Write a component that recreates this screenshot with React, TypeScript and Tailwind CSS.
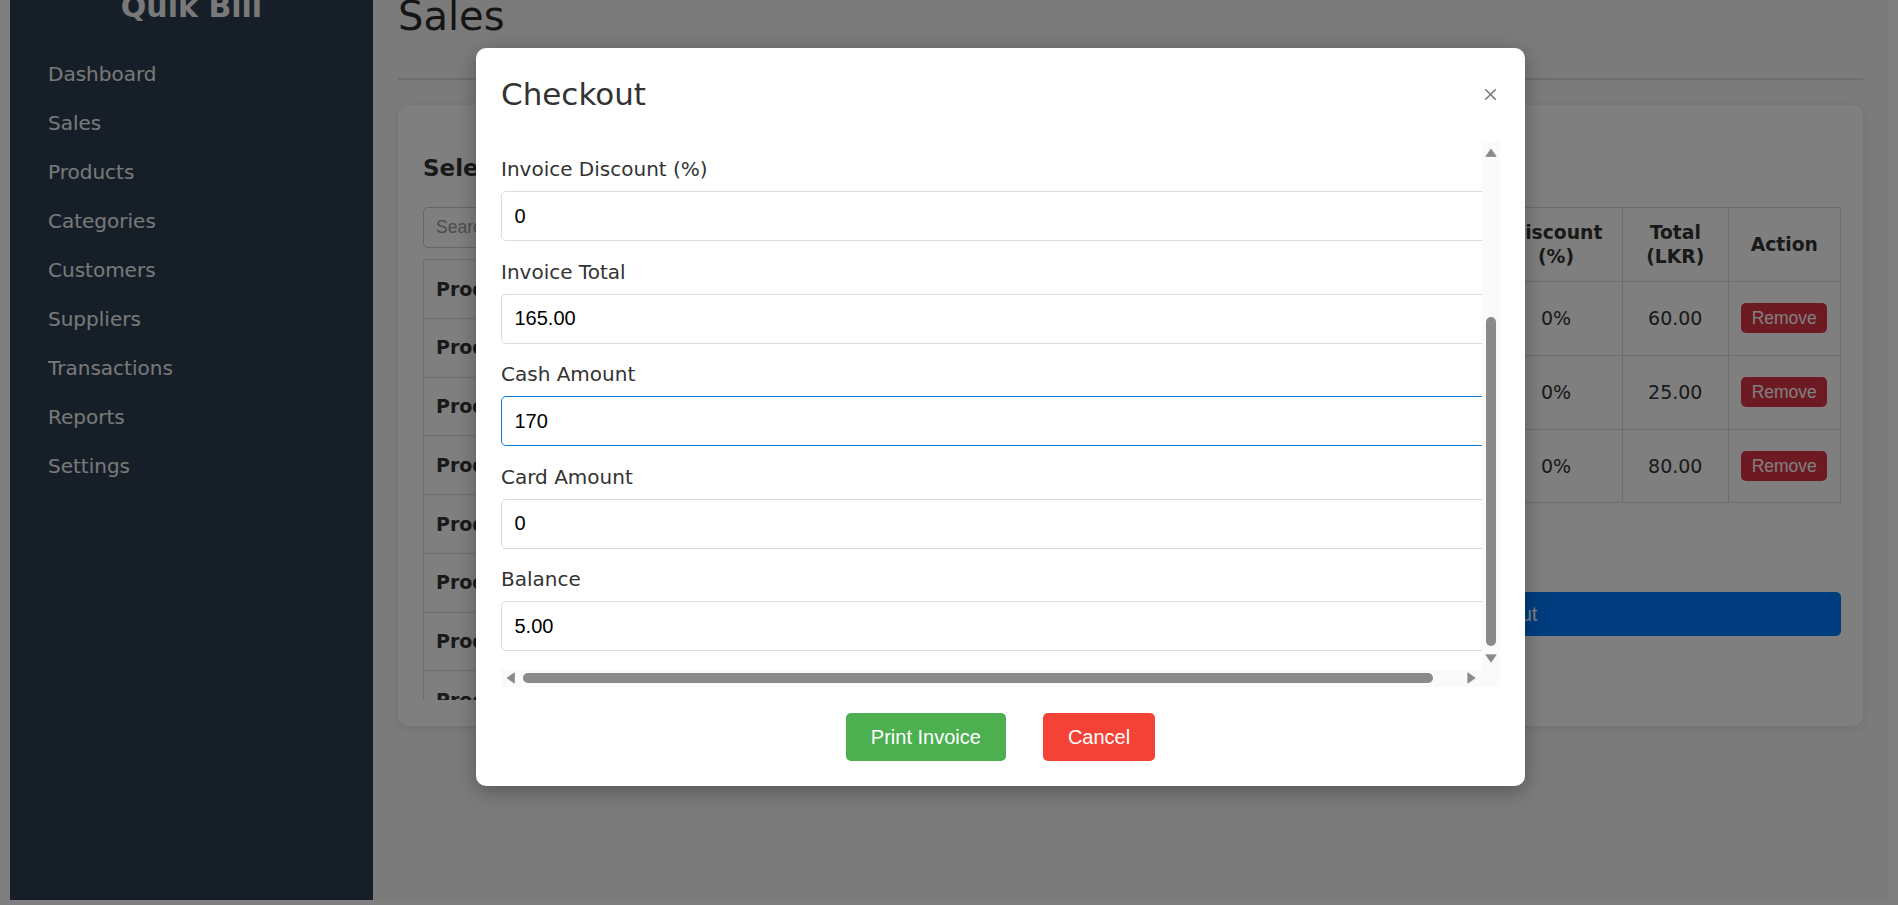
import React from "react";

const navItems = [
  "Dashboard",
  "Sales",
  "Products",
  "Categories",
  "Customers",
  "Suppliers",
  "Transactions",
  "Reports",
  "Settings",
];

const products = [
  "Product 1",
  "Product 2",
  "Product 3",
  "Product 4",
  "Product 5",
  "Product 6",
  "Product 7",
  "Product 8",
];

const cart = [
  { name: "Product 1", price: "20.00", qty: "3", disc: "0%", total: "60.00" },
  { name: "Product 2", price: "25.00", qty: "1", disc: "0%", total: "25.00" },
  { name: "Product 3", price: "40.00", qty: "2", disc: "0%", total: "80.00" },
];

const fields = [
  { label: "Invoice Discount (%)", value: "0", focused: false },
  { label: "Invoice Total", value: "165.00", focused: false },
  { label: "Cash Amount", value: "170", focused: true },
  { label: "Card Amount", value: "0", focused: false },
  { label: "Balance", value: "5.00", focused: false },
];

function Arrow({ dir }: { dir: "up" | "down" | "left" | "right" }) {
  const d =
    dir === "up"
      ? "M6 1 L11.2 8.4 L0.8 8.4 Z"
      : dir === "down"
      ? "M0.8 0.8 L11.2 0.8 L6 8.2 Z"
      : dir === "left"
      ? "M1 6 L8.4 0.8 L8.4 11.2 Z"
      : "M0.8 0.8 L8.2 6 L0.8 11.2 Z";
  const vertical = dir === "up" || dir === "down";
  return (
    <svg
      width={vertical ? 12 : 9}
      height={vertical ? 9 : 12}
      viewBox={vertical ? "0 0 12 9" : "0 0 9 12"}
    >
      <path d={d} fill="#8a8a8a" strokeLinejoin="round" stroke="#8a8a8a" strokeWidth="0.8" />
    </svg>
  );
}

export default function App() {
  return (
    <div className="relative h-[905px] w-full overflow-hidden bg-white font-['DejaVu_Sans',sans-serif] text-[#333]">
      <div className="mx-[10px] flex h-[900px]">
        <aside className="w-[363px] shrink-0 bg-[#2c3e50]">
          <h2 className="-mt-[11px] text-center text-[30px] font-bold leading-[36px] text-[#f2f2f2]">
            Quik Bill
          </h2>
          <nav className="mt-[25px] flex flex-col">
            {navItems.map((n) => (
              <a
                key={n}
                className="h-[49px] pl-[38px] text-[20px] leading-[49px] text-[#f0f2f3]"
              >
                {n}
              </a>
            ))}
          </nav>
        </aside>

        <main className="min-w-0 flex-1 bg-[#f7f7f7] px-[25px]">
          <h1 className="-mt-[8px] text-[40px] font-normal leading-[48px] text-[#2b2b2b]">
            Sales
          </h1>
          <div className="mt-[38px] h-[2px] bg-[#dddddd]" />
          <section className="mt-[25px] h-[621px] rounded-[10px] bg-white p-[25px] shadow-[0_2px_10px_rgba(0,0,0,0.1)]">
            <div className="grid grid-cols-[604px_1fr] gap-[20px]">
              <div>
                <h3 className="mt-[24px] text-[23px] font-bold leading-[28px] text-[#333]">
                  Select Products
                </h3>
                <div className="mt-[25px] flex h-[41px] items-center rounded-[5px] border border-[#cccccc] px-[12px] font-['Liberation_Sans',sans-serif] text-[17.5px] text-[#999]">
                  Search products...
                </div>
                <div className="mt-[11px] h-[441px] overflow-hidden border-x border-t border-[#dddddd]">
                  {products.map((p) => (
                    <div
                      key={p}
                      className="flex h-[58.75px] items-center border-b border-[#dddddd] pl-[12px] text-[19px] font-bold text-[#333]"
                    >
                      {p}
                    </div>
                  ))}
                </div>
              </div>

              <div>
                <h3 className="mt-[24px] text-[23px] font-bold leading-[28px] text-[#333]">
                  Cart
                </h3>
                <table className="mt-[25px] w-[793px] table-fixed border-collapse text-[#333]">
                  <colgroup>
                    <col className="w-[180px]" />
                    <col className="w-[130px]" />
                    <col className="w-[132px]" />
                    <col className="w-[133px]" />
                    <col className="w-[105.5px]" />
                    <col className="w-[112.5px]" />
                  </colgroup>
                  <thead>
                    <tr className="h-[74px]">
                      {["Product", "Price (LKR)", "Quantity", "Discount (%)", "Total (LKR)", "Action"].map(
                        (h) => (
                          <th
                            key={h}
                            className="border border-[#dddddd] px-[12.5px] text-center text-[18.75px] font-bold leading-[24px]"
                          >
                            {h}
                          </th>
                        )
                      )}
                    </tr>
                  </thead>
                  <tbody>
                    {cart.map((c) => (
                      <tr key={c.name} className="h-[73.75px]">
                        <td className="border border-[#dddddd] px-[12.5px] text-center text-[19px]">
                          {c.name}
                        </td>
                        <td className="border border-[#dddddd] px-[12.5px] text-center text-[19px]">
                          {c.price}
                        </td>
                        <td className="border border-[#dddddd] px-[12.5px] text-center text-[19px]">
                          {c.qty}
                        </td>
                        <td className="border border-[#dddddd] px-[12.5px] text-center text-[19px]">
                          {c.disc}
                        </td>
                        <td className="border border-[#dddddd] px-[12.5px] text-center text-[19px]">
                          {c.total}
                        </td>
                        <td className="border border-[#dddddd] text-center">
                          <span className="mx-auto flex h-[30px] w-[86px] items-center justify-center rounded-[5px] bg-[#dc3545] font-['Liberation_Sans',sans-serif] text-[17.5px] text-white">
                            Remove
                          </span>
                        </td>
                      </tr>
                    ))}
                  </tbody>
                </table>
                <div className="mt-[30px] h-[30px] text-[20px] font-bold leading-[30px]">
                  Total: LKR 165.00
                </div>
                <div className="mt-[29px] flex h-[43.5px] items-center justify-center rounded-[5px] bg-[#007bff] font-['Liberation_Sans',sans-serif] text-[20px] text-white">
                  Proceed to Checkout
                </div>
              </div>
            </div>
          </section>
        </main>
      </div>

      <div className="absolute inset-0 bg-black/50" />

      <div className="absolute left-[476px] top-[48px] flex h-[738px] w-[1049px] flex-col rounded-[10px] bg-white px-[25px] shadow-[0_5px_20px_rgba(0,0,0,0.3)]">
        <div className="mt-[28px] flex h-[36px] items-center justify-between">
          <h2 className="text-[31px] font-normal leading-[36px] text-[#333]">Checkout</h2>
          <svg className="mr-[3px]" width="13" height="13" viewBox="0 0 13 13">
            <path d="M1.2 1.2 L11.8 11.8 M11.8 1.2 L1.2 11.8" stroke="#7a7a7a" strokeWidth="1.6" />
          </svg>
        </div>

        <div className="mt-[29px] grid h-[546px] grid-cols-[1fr_18px] grid-rows-[1fr_18px]">
          <div className="overflow-hidden pt-[16px]">
            {fields.map((f) => (
              <div key={f.label} className="mb-[18.6px]">
                <label className="mb-[10px] block text-[20px] leading-[24px] text-[#333]">
                  {f.label}
                </label>
                <input
                  readOnly
                  value={f.value}
                  className={`block h-[50px] w-[1008px] rounded-[5px] border bg-white pl-[12.5px] font-['Liberation_Sans',sans-serif] text-[20px] text-black outline-none ${
                    f.focused ? "border-[#0b7ad4]" : "border-[#dcdcdc]"
                  }`}
                />
              </div>
            ))}
          </div>

          <div className="flex flex-col bg-[#fafafa]">
            <div className="flex h-[22px] items-center justify-center">
              <Arrow dir="up" />
            </div>
            <div className="flex flex-1 flex-col justify-end pb-[2px]">
              <div className="mx-auto h-[329px] w-[10px] rounded-full bg-[#8a8a8a]" />
            </div>
            <div className="flex h-[21px] items-center justify-center">
              <Arrow dir="down" />
            </div>
          </div>

          <div className="col-span-2 flex bg-[#fafafa]">
            <div className="flex w-[18px] items-center justify-center">
              <Arrow dir="left" />
            </div>
            <div className="flex flex-1 items-center">
              <div className="ml-[4px] h-[10px] w-[910px] rounded-full bg-[#8a8a8a]" />
            </div>
            <div className="flex w-[22px] items-center justify-center">
              <Arrow dir="right" />
            </div>
            <div className="w-[18px]" />
          </div>
        </div>

        <div className="mt-[26px] flex justify-center gap-[37px]">
          <button className="h-[48px] rounded-[5px] bg-[#4caf50] px-[25px] font-['Liberation_Sans',sans-serif] text-[20px] text-white">
            Print Invoice
          </button>
          <button className="h-[48px] rounded-[5px] bg-[#f44336] px-[25px] font-['Liberation_Sans',sans-serif] text-[20px] text-white">
            Cancel
          </button>
        </div>
      </div>
    </div>
  );
}
